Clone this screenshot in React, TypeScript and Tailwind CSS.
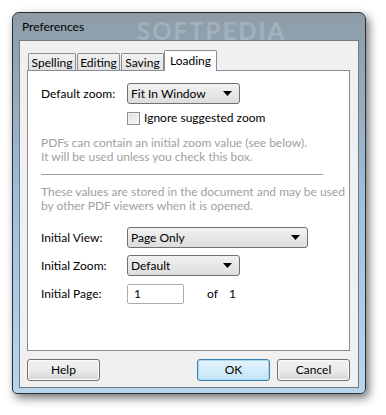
const font = { fontFamily: 'Lato, "Noto Sans", Arial, sans-serif' };

function Arrow() {
  return (
    <svg width="9" height="5" viewBox="0 0 9 5" className="shrink-0">
      <path d="M0 0h9L4.5 5z" fill="#000" />
    </svg>
  );
}

function Select({ value, width }: { value: string; width: string }) {
  return (
    <div
      className={`${width} h-[21px] flex items-center justify-between pl-[3px] pr-[7px] rounded-[3px] border border-[#707070] bg-gradient-to-b from-[#f2f2f2] to-[#dddddd] text-[12px] text-black`}
    >
      <span>{value}</span>
      <Arrow />
    </div>
  );
}

function Button({ label, primary }: { label: string; primary?: boolean }) {
  return (
    <div
      className={`w-[73px] h-[22px] flex items-center justify-center rounded-[3px] border text-[12px] text-black ${
        primary
          ? "border-[#3c7fb1] bg-gradient-to-b from-[#e5f4fc] to-[#c4e5f6] shadow-[inset_0_0_0_1px_#a8d8f2]"
          : "border-[#707070] bg-gradient-to-b from-[#f2f2f2] via-[#ebebeb] to-[#d5d5d5] shadow-[inset_0_0_0_1px_#fcfcfc]"
      }`}
    >
      {label}
    </div>
  );
}

const tabs = [
  { label: "Spelling", w: "w-[48px]" },
  { label: "Editing", w: "w-[43px]" },
  { label: "Saving", w: "w-[43px]" },
];

export default function App() {
  return (
    <div className="w-[386px] h-[415px] bg-white pt-[12px] pl-[12px]" style={font}>
      {/* Window */}
      <div className="w-[354px] h-[382px] flex flex-col rounded-t-[7px] rounded-b-[5px] border border-[#2b2f33] bg-gradient-to-b from-[#8d9ca7] via-[#9fbfdc] to-[#b9d5ee] shadow-[3px_4px_10px_rgba(0,0,0,0.55)] px-[6px] pb-[5px]">
        <div className="h-[27px] flex items-center pl-[3px] relative">
          <span className="text-[12px] text-black">Preferences</span>
          <span className="absolute left-[118px] top-[0px] text-[24px] font-bold tracking-[2px] text-[#b5c4cf]/50">
            SOFTPEDIA
          </span>
        </div>

        {/* Client */}
        <div className="flex-1 flex flex-col bg-[#f0f0f0] border border-[#6e7a83] pl-[7px] pr-[8px]">
          {/* Tabs */}
          <div className="flex items-end h-[29px] pl-[1px]">
            {tabs.map((t) => (
              <div
                key={t.label}
                className={`${t.w} h-[18px] -mb-px mr-px flex items-center justify-center border border-b-0 border-[#898c95] bg-gradient-to-b from-[#f2f2f2] to-[#e1e1e1] text-[12px] text-black rounded-t-[2px]`}
              >
                {t.label}
              </div>
            ))}
            <div className="w-[53px] h-[21px] -mb-px -ml-px flex justify-center pt-[1px] border border-b-0 border-[#898c95] bg-white text-[12px] text-black rounded-t-[2px] relative z-10">
              Loading
            </div>
          </div>

          {/* Panel */}
          <div className="h-[281px] bg-white border border-[#898c95] pl-[13px] pt-[12px] text-[12px] text-black">
            <div className="flex items-center">
              <span className="w-[86px]">Default zoom:</span>
              <Select value="Fit In Window" width="w-[113px]" />
            </div>
            <div className="flex items-center mt-[5px] ml-[86px] gap-[4px]">
              <div className="w-[13px] h-[13px] border border-[#8f8f8f] bg-gradient-to-br from-[#dcdcdc] to-[#fbfbfb] shadow-[inset_0_0_0_1px_#f4f4f4]" />
              <span>Ignore suggested zoom</span>
            </div>
            <div className="mt-[9px] text-[#a0a0a0] leading-[14px]">
              <p>PDFs can contain an initial zoom value (see below).</p>
              <p>It will be used unless you check this box.</p>
            </div>
            <div className="mt-[10px] w-[282px] h-px bg-[#a0a0a0]" />
            <div className="mt-[10px] text-[#a0a0a0] leading-[14px]">
              <p>These values are stored in the document and may be used</p>
              <p>by other PDF viewers when it is opened.</p>
            </div>
            <div className="flex items-center mt-[14px]">
              <span className="w-[86px]">Initial View:</span>
              <Select value="Page Only" width="w-[181px]" />
            </div>
            <div className="flex items-center mt-[7px]">
              <span className="w-[86px]">Initial Zoom:</span>
              <Select value="Default" width="w-[113px]" />
            </div>
            <div className="flex items-center mt-[8px]">
              <span className="w-[86px]">Initial Page:</span>
              <div className="w-[57px] h-[20px] flex items-center pl-[6px] border border-[#abadb3] rounded-[2px] bg-white">
                1
              </div>
              <span className="ml-[23px]">of</span>
              <span className="ml-[11px]">1</span>
            </div>
          </div>

          {/* Buttons */}
          <div className="flex items-center mt-[8px]">
            <Button label="Help" />
            <div className="flex-1" />
            <Button label="OK" primary />
            <div className="w-[7px]" />
            <Button label="Cancel" />
          </div>
        </div>
      </div>
    </div>
  );
}
